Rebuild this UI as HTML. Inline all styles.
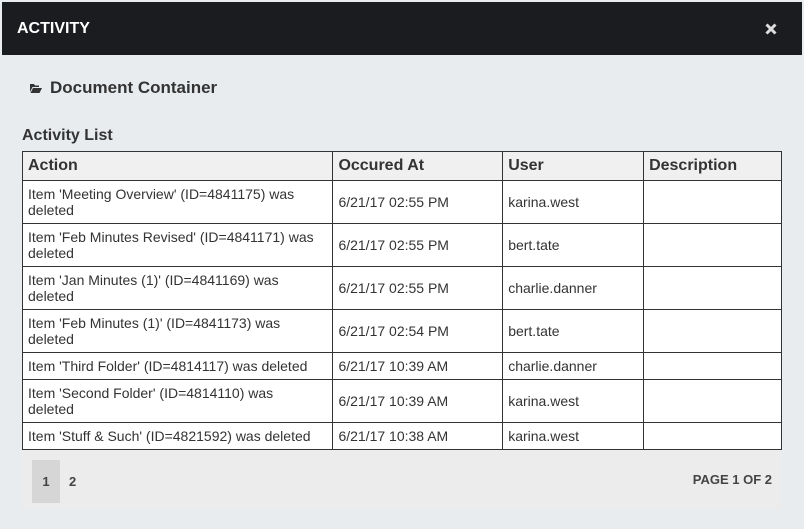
<!DOCTYPE html><html><head><style>
body{margin:0;width:804px;height:529px;background:#e9ecef;font-family:"Liberation Sans",sans-serif;position:relative;overflow:hidden}
.hd{position:absolute;left:2px;top:2px;width:800px;height:53px;background:#1a1c20;color:#fff}
.hd b{position:absolute;left:15px;top:18px;font-size:16px}
.hd svg{position:absolute;right:25px;top:21px}
.dc{position:absolute;left:50px;top:78px;font-size:17px;font-weight:bold;color:#333}
.ic{position:absolute;left:30px;top:84px}
.al{position:absolute;left:22px;top:127px;font-size:16px;font-weight:bold;color:#333}
table{position:absolute;left:22px;top:151px;width:760px;border-collapse:collapse;font-size:14px;color:#333}
td,th{border:1px solid #333;padding:0 5px;text-align:left;vertical-align:middle;line-height:16px}
th{background:#f0f0f0;height:28px;font-size:16px}
td{background:#fff}
.pg{position:absolute;left:22px;top:450px;width:760px;height:60px;background:#ececec;color:#444;font-size:13px;font-weight:bold}
.b1{position:absolute;left:10px;top:10px;width:28px;height:43px;background:#d6d6d6;line-height:43px;text-align:center}
.b2{position:absolute;left:47px;top:24px}
.pt{position:absolute;right:10px;top:22px}
</style></head><body>
<div class="hd"><b>ACTIVITY</b><svg width="12" height="12" viewBox="0 0 12 12"><path d="M1.5 1.5L10.5 10.5M10.5 1.5L1.5 10.5" stroke="#ddd" stroke-width="3"/></svg></div>
<svg class="ic" width="12" height="9" viewBox="0 0 12 9"><path d="M0 0H4L5 1.5H9V3H2.5L0 8Z M3 4H12L9.5 9H0.5Z" fill="#333"/></svg>
<div class="dc">Document Container</div>
<div class="al">Activity List</div>
<table>
<colgroup><col style="width:311px"><col style="width:170px"><col style="width:141px"><col style="width:138px"></colgroup>
<tr><th>Action</th><th>Occured At</th><th>User</th><th>Description</th></tr>
<tr style="height:43px"><td>Item 'Meeting Overview' (ID=4841175) was<br>deleted</td><td>6/21/17 02:55 PM</td><td>karina.west</td><td></td></tr>
<tr style="height:43px"><td>Item 'Feb Minutes Revised' (ID=4841171) was<br>deleted</td><td>6/21/17 02:55 PM</td><td>bert.tate</td><td></td></tr>
<tr style="height:43px"><td>Item 'Jan Minutes (1)' (ID=4841169) was<br>deleted</td><td>6/21/17 02:55 PM</td><td>charlie.danner</td><td></td></tr>
<tr style="height:43px"><td>Item 'Feb Minutes (1)' (ID=4841173) was<br>deleted</td><td>6/21/17 02:54 PM</td><td>bert.tate</td><td></td></tr>
<tr style="height:27px"><td>Item 'Third Folder' (ID=4814117) was deleted</td><td>6/21/17 10:39 AM</td><td>charlie.danner</td><td></td></tr>
<tr style="height:43px"><td>Item 'Second Folder' (ID=4814110) was<br>deleted</td><td>6/21/17 10:39 AM</td><td>karina.west</td><td></td></tr>
<tr style="height:27px"><td>Item 'Stuff &amp; Such' (ID=4821592) was deleted</td><td>6/21/17 10:38 AM</td><td>karina.west</td><td></td></tr>
</table>
<div class="pg"><div class="b1">1</div><div class="b2">2</div><div class="pt">PAGE 1 OF 2</div></div>
</body></html>
